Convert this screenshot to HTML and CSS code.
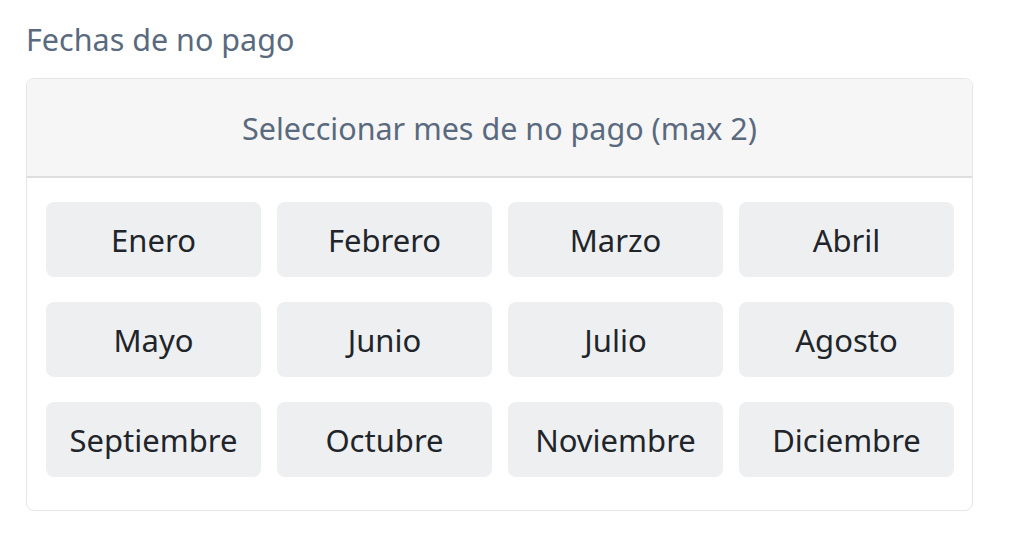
FILE: index.html
```html
<!DOCTYPE html>
<html lang="es">
<head>
<meta charset="utf-8">
<title>Fechas de no pago</title>
<link rel="stylesheet" href="styles.css">
</head>
<body>
<div class="page">
  <h2 class="title">Fechas de no pago</h2>
  <div class="card">
    <div class="card-header">Seleccionar mes de no pago (max 2)</div>
    <div class="months">
      <button class="month">Enero</button>
      <button class="month">Febrero</button>
      <button class="month">Marzo</button>
      <button class="month">Abril</button>
      <button class="month">Mayo</button>
      <button class="month">Junio</button>
      <button class="month">Julio</button>
      <button class="month">Agosto</button>
      <button class="month">Septiembre</button>
      <button class="month">Octubre</button>
      <button class="month">Noviembre</button>
      <button class="month">Diciembre</button>
    </div>
  </div>
</div>
</body>
</html>
```
FILE: styles.css
```css
html, body {
  margin: 0;
  padding: 0;
  background: #ffffff;
}
body {
  font-family: "Noto Sans", "Open Sans", sans-serif;
}
.page {
  width: 947px;
  padding: 19px 0 0 26px;
}
.title {
  margin: 0 0 19px 0;
  font-size: 30.5px;
  line-height: 40px;
  font-weight: 400;
  color: #5a6a7e;
}
.card {
  border: 1px solid #e6e6e6;
  border-radius: 8px;
  overflow: hidden;
  background: #ffffff;
}
.card-header {
  height: 97px;
  display: flex;
  align-items: center;
  justify-content: center;
  background: #f6f6f6;
  border-bottom: 2px solid #dedede;
  font-size: 30.5px;
  color: #5a6a7e;
}
.months {
  display: grid;
  grid-template-columns: repeat(4, 215px);
  grid-auto-rows: 75px;
  column-gap: 16px;
  row-gap: 25px;
  padding: 24px 18px 33px 19px;
}
.month {
  border: none;
  border-radius: 8px;
  background: #eeeff1;
  font-family: inherit;
  font-size: 31px;
  color: #212529;
  padding: 0;
  cursor: pointer;
}
```
